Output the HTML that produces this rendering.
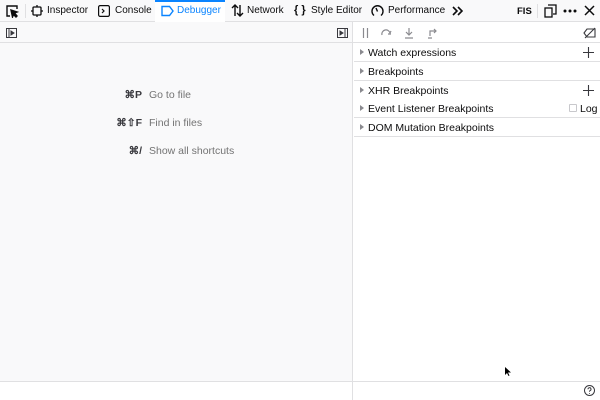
<!DOCTYPE html>
<html><head><style>
*{margin:0;padding:0;box-sizing:border-box}
body{width:600px;height:400px;overflow:hidden;background:#f9f9fa;font-family:"Liberation Sans",sans-serif;font-size:10.5px;color:#0c0c0d;position:relative}
.a{position:absolute}
.tb{left:0;top:0;width:600px;height:22px;background:#f9f9fa;border-bottom:1px solid #e0e0e2}
.t{position:absolute;top:5px;white-space:nowrap;font-size:10px}
svg{position:absolute}
.row{position:absolute;left:354px;width:246px;height:19px;border-bottom:1px solid #e0e0e2;background:#fff}
.row span{position:absolute;left:14px;top:4px}
.row i{position:absolute;left:6px;top:6px;width:0;height:0;border-left:4px solid #8a8a8f;border-top:3.5px solid transparent;border-bottom:3.5px solid transparent}
.row svg{left:229px;top:4px}
.k{position:absolute;text-align:right;width:60px;left:82px;font-weight:bold;color:#38383d}
.d{position:absolute;left:149px;color:#737373}
</style></head><body>
<div class="a tb"></div>
<div class="a" style="left:155px;top:0;width:70px;height:2px;background:#0a84ff"></div>
<div class="a" style="left:155px;top:2px;width:70px;height:20px;background:#fff"></div>
<svg style="left:5px;top:4px" width="14" height="14" viewBox="0 0 14 14" fill="none" stroke="#0c0c0d" stroke-width="1.4"><path d="M5 12H2V2h10v3"/><path d="M6 6l6 2-2.5 1L12 12l-1 1-2.5-2.5L7.5 13z" fill="#0c0c0d"/></svg>
<div class="a" style="left:25px;top:4px;width:1px;height:14px;background:#e0e0e2"></div>
<svg style="left:31px;top:5px" width="12" height="12" viewBox="0 0 12 12" fill="none" stroke="#0c0c0d" stroke-width="1.3"><rect x="2" y="2" width="8" height="8" rx="1"/><path d="M6 0v2M6 10v2M0 6h2M10 6h2"/></svg>
<div class="t" style="left:47px">Inspector</div>
<svg style="left:98px;top:5px" width="12" height="12" viewBox="0 0 12 12" fill="none" stroke="#0c0c0d" stroke-width="1.2"><rect x="0.6" y="0.6" width="10.8" height="10.8" rx="1.5"/><path d="M4 4l2 2-2 2"/></svg>
<div class="t" style="left:115px">Console</div>
<svg style="left:161px;top:5px" width="13" height="12" viewBox="0 0 13 12" fill="none" stroke="#0a84ff" stroke-width="1.4"><path d="M1 1.5h7.5L12 6l-3.5 4.5H1z"/></svg>
<div class="t" style="left:177px;color:#0a84ff">Debugger</div>
<svg style="left:231px;top:4px" width="13" height="13" viewBox="0 0 13 13" fill="none" stroke="#0c0c0d" stroke-width="1.4"><path d="M4 12V1M1 4l3-3 3 3M9 1v11M6 9l3 3 3-3"/></svg>
<div class="t" style="left:247px">Network</div>
<div class="t" style="left:294px;font-weight:bold;top:4px;font-size:11px">{ }</div>
<div class="t" style="left:311px">Style Editor</div>
<svg style="left:371px;top:4px" width="13" height="13" viewBox="0 0 13 13" fill="none" stroke="#0c0c0d" stroke-width="1.4"><path d="M3 11.5A5.5 5.5 0 1 1 10 11.5"/><path d="M6.5 7.5L5 4"/></svg>
<div class="t" style="left:388px">Performance</div>
<svg style="left:452px;top:6px" width="11" height="10" viewBox="0 0 11 10" fill="none" stroke="#0c0c0d" stroke-width="1.6"><path d="M1 1l4 4-4 4M6 1l4 4-4 4"/></svg>
<div class="t" style="left:517px;font-weight:bold;font-size:9.5px;top:6px">FIS</div>
<div class="a" style="left:537px;top:4px;width:1px;height:14px;background:#e0e0e2"></div>
<svg style="left:544px;top:4px" width="13" height="14" viewBox="0 0 13 14" fill="none" stroke="#0c0c0d" stroke-width="1.3"><rect x="1" y="4" width="7" height="9"/><path d="M4 1h8v9h-3"/></svg>
<svg style="left:563px;top:9px" width="14" height="4" viewBox="0 0 14 4" fill="#0c0c0d"><circle cx="2" cy="2" r="1.5"/><circle cx="7" cy="2" r="1.5"/><circle cx="12" cy="2" r="1.5"/></svg>
<svg style="left:584px;top:5px" width="11" height="11" viewBox="0 0 11 11" stroke="#0c0c0d" stroke-width="1.5"><path d="M1 1l9 9M10 1l-9 9"/></svg>

<div class="a" style="left:0;top:22px;width:600px;height:21px;border-bottom:1px solid #e0e0e2;background:#f9f9fa"></div>
<div class="a" style="left:353px;top:22px;width:247px;height:21px;border-bottom:1px solid #e0e0e2;background:#fff"></div>
<svg style="left:6px;top:28px" width="11" height="10" viewBox="0 0 11 10" fill="none" stroke="#38383d"><rect x=".5" y=".5" width="10" height="9"/><path d="M3 .5v9"/><path d="M5 3l3 2-3 2z" fill="#38383d"/></svg>
<svg style="left:337px;top:28px" width="11" height="10" viewBox="0 0 11 10" fill="none" stroke="#38383d"><rect x=".5" y=".5" width="10" height="9"/><path d="M8 .5v9"/><path d="M3 3l3 2-3 2z" fill="#38383d"/></svg>
<svg style="left:362px;top:27px" width="80" height="12" viewBox="0 0 80 12" fill="none" stroke="#8a8a8f" stroke-width="1.2"><path d="M1.5 1v10M5.5 1v10"/><path d="M20 8a4 4 0 0 1 8-2l1-2M29 7h-3"/><path d="M47 1v7M44 5l3 3 3-3M43 11h8"/><path d="M66 11h4M68 9V4h6M72 2l2 2-2 2"/></svg>
<svg style="left:583px;top:27px" width="13" height="12" viewBox="0 0 13 12" fill="none" stroke="#38383d" stroke-width="1.1"><path d="M1 6l3-4h8v8H4z"/><path d="M2 11L12 1"/></svg>

<div class="a" style="left:353px;top:43px;width:247px;height:338px;background:#fff"></div>
<div class="a" style="left:352px;top:22px;width:1px;height:378px;background:#e0e0e2"></div>
<div class="row" style="top:43px"><i></i><span>Watch expressions</span><svg width="11" height="11" viewBox="0 0 11 11" stroke="#38383d" stroke-width="1.1"><path d="M5.5 0v11M0 5.5h11"/></svg></div>
<div class="row" style="top:62px"><i></i><span>Breakpoints</span></div>
<div class="row" style="top:81px"><i></i><span>XHR Breakpoints</span><svg width="11" height="11" viewBox="0 0 11 11" stroke="#38383d" stroke-width="1.1"><path d="M5.5 0v11M0 5.5h11"/></svg></div>
<div class="row" style="top:99px"><i></i><span>Event Listener Breakpoints</span><div class="a" style="left:215px;top:5px;width:8px;height:8px;border:1px solid #c8c8cc;border-radius:1px"></div><span style="left:226px">Log</span></div>
<div class="row" style="top:118px"><i></i><span>DOM Mutation Breakpoints</span></div>

<div class="k" style="top:89px">⌘P</div><div class="d" style="top:89px">Go to file</div>
<div class="k" style="top:117px">⌘⇧F</div><div class="d" style="top:117px">Find in files</div>
<div class="k" style="top:145px">⌘/</div><div class="d" style="top:145px">Show all shortcuts</div>

<div class="a" style="left:0;top:381px;width:600px;height:19px;background:#fff;border-top:1px solid #e0e0e2"></div>
<div class="a" style="left:352px;top:381px;width:1px;height:19px;background:#e0e0e2"></div>
<svg style="left:584px;top:385px" width="11" height="11" viewBox="0 0 11 11" fill="none" stroke="#38383d"><circle cx="5.5" cy="5.5" r="5"/><path d="M4 4.2a1.5 1.5 0 1 1 2 1.4c-.5.2-.5.6-.5 1.2M5.5 8v.8"/></svg>
<svg style="left:505px;top:367px" width="7" height="10" viewBox="0 0 7 10"><path d="M0 0v8l2-2 1.5 3 1-.5L3 5.5h3z" fill="#000"/></svg>
</body></html>
